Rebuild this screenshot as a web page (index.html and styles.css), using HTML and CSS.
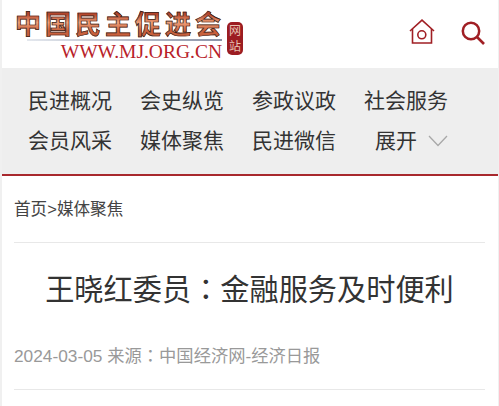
FILE: index.html
```html
<!DOCTYPE html>
<html lang="zh-CN">
<head>
    <meta charset="UTF-8">
    <meta name="viewport" content="width=device-width, initial-scale=1.0">
    <title>王晓红委员：金融服务及时便利</title>
    <link rel="stylesheet" href="styles.css">
</head>
<body>
    <div class="page">
        <header class="top">
            <div class="logo">
                <div class="logo-text">
                    <div class="logo-name">中国民主促进会</div>
                    <div class="logo-rule"></div>
                    <div class="logo-url">WWW.MJ.ORG.CN</div>
                </div>
                <div class="logo-seal">网站</div>
            </div>
            <div class="top-icons">
                <svg class="icon-home" width="26" height="25" viewBox="0 0 26 25" fill="none" stroke="#a01f24" stroke-width="1.600">
                    <path d="M1 12 L13 1.200 L25 12"/>
                    <path d="M3.500 10 V24 H22.500 V10"/>
                    <circle cx="12.800" cy="15.800" r="4"/>
                </svg>
                <svg class="icon-search" width="24" height="24" viewBox="0 0 24 24" fill="none" stroke="#a01f24">
                    <circle cx="10" cy="10" r="8.200" stroke-width="2.500"/>
                    <path d="M16 16 L23 23" stroke-width="2.600"/>
                </svg>
            </div>
        </header>

        <nav class="nav">
            <a>民进概况</a>
            <a>会史纵览</a>
            <a>参政议政</a>
            <a>社会服务</a>
            <a>会员风采</a>
            <a>媒体聚焦</a>
            <a>民进微信</a>
            <a class="nav-more">展开
                <svg width="20" height="12" viewBox="0 0 20 12" fill="none" stroke="#a8a8a8" stroke-width="1.300">
                    <path d="M1 1 L10 10.500 L19 1"/>
                </svg>
            </a>
        </nav>

        <main class="content">
            <div class="crumbs">首页&gt;媒体聚焦</div>
            <h1 class="title">王晓红委员<span class="colon" lang="zh-TW">：</span>金融服务及时便利</h1>
            <div class="meta">2024-03-05 来源<span class="colon" lang="zh-TW">：</span>中国经济网-经济日报</div>
        </main>
    </div>
</body>
</html>
```

FILE: styles.css
```css
html, body {
    margin: 0;
    padding: 0;
    background: #f0f0f0;
}

body {
    font-family: "Liberation Sans", "Noto Sans CJK SC", sans-serif;
    color: #333;
    height: 406px;
    overflow: hidden;
}

.page {
    margin: 0 1px 0 2px;
    height: 406px;
    background: #fff;
}

.top {
    display: flex;
    justify-content: space-between;
    align-items: flex-start;
    height: 68px;
    padding: 0 13px 0 12px;
    box-sizing: border-box;
}

.logo {
    display: flex;
    align-items: flex-start;
    padding-top: 6px;
}

.logo-text {
    width: 208px;
}

.logo-name {
    padding-left: 1px;
    font-family: "Noto Sans CJK SC", sans-serif;
    font-size: 26px;
    font-weight: 700;
    line-height: 33px;
    letter-spacing: 4px;
    white-space: nowrap;
    -webkit-text-stroke: 0.7px #3a1f1a;
    background: linear-gradient(#b5462c 25%, #f0a078 50%, #c9603c 75%);
    -webkit-background-clip: text;
    background-clip: text;
    color: transparent;
}

.logo-rule {
    height: 2px;
    margin-left: 13px;
    background: linear-gradient(to right, #e4e8ee, #8c94a8);
}

.logo-url {
    font-family: "Liberation Serif", serif;
    font-size: 19.500px;
    line-height: 22px;
    color: #b8222a;
    text-align: right;
}

.logo-seal {
    width: 16px;
    height: 33px;
    margin: 16px 0 0 5px;
    border-radius: 5px;
    background: #9c1d22;
    color: #e8c4b4;
    font-family: "Noto Sans CJK SC", sans-serif;
    font-size: 12px;
    line-height: 16px;
    text-align: center;
}

.top-icons {
    display: flex;
    align-items: flex-start;
    gap: 26px;
    padding-top: 19px;
}

.icon-search {
    margin-top: 2px;
}

.nav {
    display: grid;
    grid-template-columns: repeat(4, 112px);
    grid-auto-rows: 40px;
    align-content: start;
    height: 108px;
    padding: 13px 0 0 26px;
    box-sizing: border-box;
    background: #eeeeee;
    border-bottom: 2px solid #a8282d;
    font-size: 21px;
    line-height: 40px;
    color: #333;
}

.nav a {
    white-space: nowrap;
}

.nav-more {
    display: flex;
    align-items: center;
    gap: 11px;
    padding-left: 11px;
}

.content {
    padding: 0 13px 0 12px;
}

.crumbs {
    height: 66px;
    line-height: 67px;
    font-size: 16.600px;
    color: #444;
    border-bottom: 1px solid #e8e8e8;
}

.title {
    margin: 0;
    padding: 25px 0 22px;
    font-size: 29.200px;
    font-weight: 400;
    line-height: 44px;
    text-align: center;
    color: #333;
}

/* the centred full-width colon only comes with the TC cut */
.colon {
    font-family: "Noto Sans CJK TC", sans-serif;
    line-height: 0;
}

.meta {
    height: 55px;
    font-size: 17.300px;
    line-height: 44px;
    color: #999;
    border-bottom: 1px solid #e8e8e8;
}
```
